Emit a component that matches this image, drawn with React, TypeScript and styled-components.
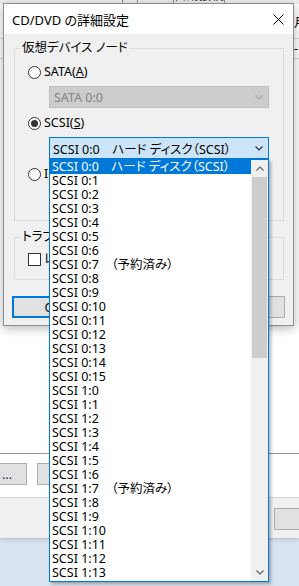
import React from "react";
import styled, { createGlobalStyle } from "styled-components";

const GlobalStyle = createGlobalStyle`
  html, body {
    margin: 0;
    padding: 0;
  }
  body {
    font-family: "Noto Sans", "Noto Sans CJK JP", sans-serif;
    font-size: 12.5px;
    color: #000;
    font-feature-settings: "palt";
  }
`;

const slots = [
  ...Array.from({ length: 16 }, (_, i) => `0:${i}`),
  ...Array.from({ length: 14 }, (_, i) => `1:${i}`),
];

const Chevron = ({ up, color }: { up?: boolean; color: string }) => (
  <svg width="8" height="5" viewBox="0 0 8 5">
    <polyline
      points={up ? "0.5,4.5 4,1 7.5,4.5" : "0.5,0.5 4,4 7.5,0.5"}
      fill="none"
      stroke={color}
      strokeWidth="1.2"
    />
  </svg>
);

const App = () => {
  return (
    <Screen>
      <GlobalStyle />

      <MainWindow>
        <TopStrip>
          <StripBox $left={122} $width={16} />
          <StripBox $left={35} $width={52}>自動接続</StripBox>
        </TopStrip>
        <HeaderRow>
          <ClippedText>月</ClippedText>
        </HeaderRow>
        <ColumnHeader>
          <ClippedText>
            -<Mark />
          </ClippedText>
        </ColumnHeader>
        <ListArea />
        <ButtonRow>
          <BgButton $width={40} $offset={-13}>...</BgButton>
          <BgButton $width={75} $offset={10} />
        </ButtonRow>
        <StatusBar>
          <BgButton $width={75} $offset={0}>
            <Mark />
          </BgButton>
        </StatusBar>
      </MainWindow>

      <Dialog>
        <TitleBar>
          <Title>CD/DVD の詳細設定</Title>
          <svg width="11" height="11" viewBox="0 0 11 11">
            <path d="M0.5 0.5 L10.5 10.5 M10.5 0.5 L0.5 10.5" stroke="#000" strokeWidth="1" />
          </svg>
        </TitleBar>

        <Body>
          <Group>
            <Legend>仮想デバイス ノード</Legend>
            <GroupBody>
              <OptionRow>
                <Radio />
                <span>
                  SATA(<u>A</u>)
                </span>
              </OptionRow>
              <Combo $state="disabled">
                <span>SATA 0:0</span>
                <Chevron color="#a8a8a8" />
              </Combo>

              <OptionRow $spaced>
                <Radio $checked />
                <span>
                  SCSI(<u>S</u>)
                </span>
              </OptionRow>
              <ComboWrap>
                <Combo $state="open">
                  <span>SCSI 0:0　ハード ディスク（SCSI）</span>
                  <Chevron color="#333" />
                </Combo>
                <DropList>
                  <Items>
                    {slots.map((s, i) => (
                      <Item key={s} $selected={i === 0}>
                        SCSI {s}
                        {i === 0 && "　ハード ディスク（SCSI）"}
                        {s.endsWith(":7") && "　（予約済み）"}
                      </Item>
                    ))}
                  </Items>
                  <ScrollBar>
                    <ScrollArrow>
                      <Chevron up color="#606060" />
                    </ScrollArrow>
                    <Thumb />
                    <ScrollArrow>
                      <Chevron color="#606060" />
                    </ScrollArrow>
                  </ScrollBar>
                </DropList>
              </ComboWrap>

              <OptionRow $spaced>
                <Radio />
                <span>
                  IDE(<u>I</u>)
                </span>
              </OptionRow>
              <Combo $state="disabled">
                <span>IDE 0:0</span>
                <Chevron color="#a8a8a8" />
              </Combo>
            </GroupBody>
          </Group>

          <Group $second>
            <Legend>トラブルシューティング</Legend>
            <CheckBody>
              <OptionRow>
                <CheckBox />
                <span>
                  レガシー エミュレーション(<u>L</u>)
                </span>
              </OptionRow>
            </CheckBody>
          </Group>

          <Buttons>
            <DialogButton $focused>OK</DialogButton>
            <DialogButton>キャンセル</DialogButton>
            <DialogButton>ヘルプ</DialogButton>
          </Buttons>
        </Body>
      </Dialog>
    </Screen>
  );
};

export default App;

const Screen = styled.div`
  position: relative;
  width: 299px;
  height: 586px;
  overflow: hidden;
  background: #d9e3f0;
`;

/* window behind the dialog */
const MainWindow = styled.div`
  display: flex;
  flex-direction: column;
  height: 538px;
  background: #fff;
  box-shadow: 0 1px 4px rgba(0, 0, 0, 0.2);
`;

const TopStrip = styled.div`
  display: flex;
  align-items: flex-end;
  height: 4px;
  overflow: hidden;
  background: #f0f0f0;
`;

const StripBox = styled.div<{ $left: number; $width: number }>`
  flex: none;
  margin-left: ${(p) => p.$left}px;
  width: ${(p) => p.$width}px;
  height: 16px;
  line-height: 14px;
  border: 1px solid #8c8c8c;
  box-sizing: border-box;
  color: #444;
  white-space: nowrap;
  overflow: hidden;
`;

const HeaderRow = styled.div`
  display: flex;
  justify-content: flex-end;
  align-items: center;
  height: 34px;
`;

const ClippedText = styled.span`
  display: flex;
  align-items: center;
  margin-right: -7px;
  width: 12px;
  white-space: nowrap;
  color: #000;
`;

const Mark = styled.span`
  display: inline-block;
  width: 3px;
  height: 5px;
  margin-left: 1px;
  background: #e8a020;
`;

const ColumnHeader = styled.div`
  display: flex;
  justify-content: flex-end;
  align-items: center;
  height: 19px;
  border-top: 1px solid #d5d5d5;
  border-bottom: 1px solid #d5d5d5;
`;

const ListArea = styled.div`
  flex: 1;
  border-bottom: 1px solid #9a9a9a;
`;

const ButtonRow = styled.div`
  display: flex;
  align-items: flex-start;
  height: 34px;
  padding-top: 9px;
  border-bottom: 1px solid #dadada;
`;

const BgButton = styled.div<{ $width: number; $offset: number }>`
  flex: none;
  display: flex;
  align-items: center;
  justify-content: center;
  width: ${(p) => p.$width}px;
  height: 22px;
  margin-left: ${(p) => p.$offset}px;
  box-sizing: border-box;
  border: 1px solid #adadad;
  background: #e1e1e1;
  color: #1a2a5a;
`;

const StatusBar = styled.div`
  display: flex;
  justify-content: flex-end;
  height: 30px;
  padding-top: 10px;
  margin-right: -50px;
  background: #f0f0f0;
`;

/* dialog */
const Dialog = styled.div`
  position: absolute;
  left: 3px;
  top: 3px;
  width: 291px;
  height: 323px;
  box-sizing: border-box;
  border: 1px solid #8e8e8e;
  background: #f0f0f0;
  box-shadow: 0 2px 10px rgba(0, 0, 0, 0.3);
  z-index: 5;
`;

const TitleBar = styled.div`
  display: flex;
  align-items: center;
  justify-content: space-between;
  height: 30px;
  padding: 0 9px 0 8px;
  background: #fff;
`;

const Title = styled.span`
  font-size: 13px;
`;

const Body = styled.div`
  padding: 7px 8px;
`;

const Group = styled.fieldset<{ $second?: boolean }>`
  margin: ${(p) => (p.$second ? "9px" : "0")} 1px 0 2px;
  padding: 0;
  min-width: 0;
  border: 1px solid #dcdcdc;
`;

const Legend = styled.legend`
  margin-left: 5px;
  padding: 0 2px;
  line-height: 14px;
  height: 14px;
`;

const GroupBody = styled.div`
  display: flex;
  flex-direction: column;
  padding: 10px 0 10px 13px;
`;

const CheckBody = styled.div`
  padding: 8px 0 13px 13px;
`;

const OptionRow = styled.div<{ $spaced?: boolean }>`
  display: flex;
  align-items: center;
  gap: 3px;
  height: 14px;
  margin-top: ${(p) => (p.$spaced ? "8px" : "0")};
  white-space: nowrap;
  line-height: 14px;
`;

const Radio = styled.span<{ $checked?: boolean }>`
  flex: none;
  position: relative;
  width: 13px;
  height: 13px;
  box-sizing: border-box;
  border: 1px solid #333;
  border-radius: 50%;
  background: #fff;
  &::after {
    content: "";
    display: ${(p) => (p.$checked ? "block" : "none")};
    position: absolute;
    left: 2px;
    top: 2px;
    width: 7px;
    height: 7px;
    border-radius: 50%;
    background: #333;
  }
`;

const CheckBox = styled.span`
  flex: none;
  width: 13px;
  height: 13px;
  box-sizing: border-box;
  border: 1px solid #333;
  background: #fff;
`;

const ComboWrap = styled.div`
  position: relative;
  z-index: 10;
`;

const Combo = styled.div<{ $state: "disabled" | "open" }>`
  display: flex;
  align-items: center;
  justify-content: space-between;
  width: 220px;
  height: 22px;
  margin: 7px 0 0 21px;
  padding: 0 5px 0 ${(p) => (p.$state === "open" ? "3px" : "4px")};
  box-sizing: border-box;
  border: 1px solid ${(p) => (p.$state === "open" ? "#0078d7" : "#bfbfbf")};
  background: ${(p) => (p.$state === "open" ? "#cce4f7" : "#cccccc")};
  color: ${(p) => (p.$state === "open" ? "#000" : "#838383")};
  white-space: nowrap;
`;

const DropList = styled.div`
  position: absolute;
  top: 100%;
  left: 21px;
  display: flex;
  width: 220px;
  height: 423px;
  box-sizing: border-box;
  border: 1px solid #0078d7;
  background: #fff;
  box-shadow: 2px 2px 3px rgba(0, 0, 0, 0.3);
`;

const Items = styled.div`
  flex: 1;
  display: flex;
  flex-direction: column;
  overflow: hidden;
`;

const Item = styled.div<{ $selected?: boolean }>`
  flex: none;
  height: 14px;
  line-height: 14px;
  padding-left: 2px;
  white-space: nowrap;
  background: ${(p) => (p.$selected ? "#0078d7" : "transparent")};
  color: ${(p) => (p.$selected ? "#fff" : "#000")};
`;

const ScrollBar = styled.div`
  flex: none;
  display: flex;
  flex-direction: column;
  width: 17px;
  background: #f0f0f0;
`;

const ScrollArrow = styled.div`
  display: flex;
  align-items: center;
  justify-content: center;
  height: 17px;
  &:last-child {
    margin-top: auto;
  }
`;

const Thumb = styled.div`
  height: 181px;
  margin: 0 1px;
  background: #cdcdcd;
`;

const Buttons = styled.div`
  display: grid;
  grid-template-columns: repeat(3, 1fr);
  gap: 13px;
  margin-top: 16px;
`;

const DialogButton = styled.div<{ $focused?: boolean }>`
  display: flex;
  align-items: center;
  justify-content: center;
  height: 22px;
  box-sizing: border-box;
  border: ${(p) => (p.$focused ? "2px solid #0078d7" : "1px solid #adadad")};
  background: #e1e1e1;
  white-space: nowrap;
`;
